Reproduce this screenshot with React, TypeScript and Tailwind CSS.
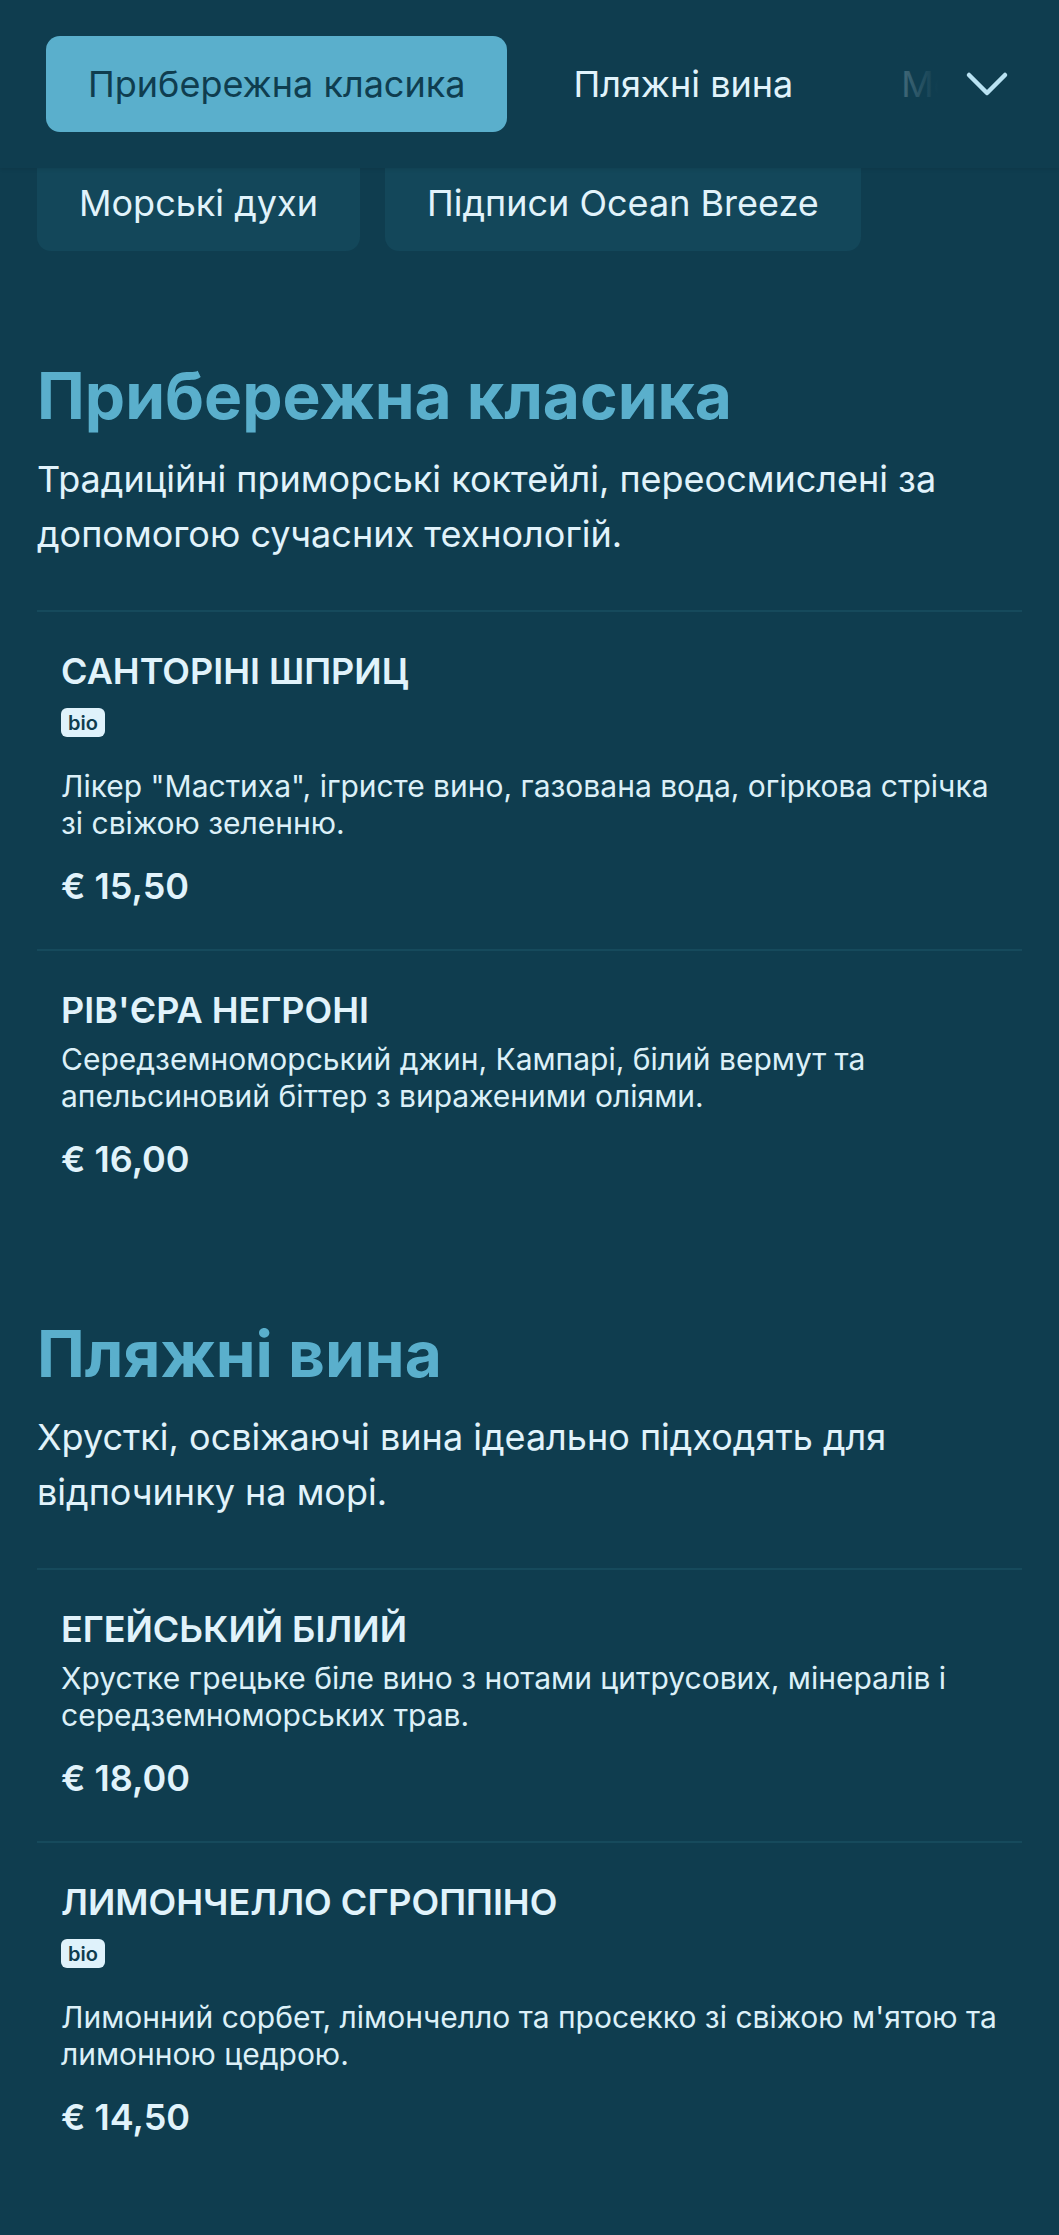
import React from 'react';

type Item = { name: string; bio?: boolean; desc: string; price: string };
type Section = { title: string; desc: string; items: Item[] };

const sections: Section[] = [
  {
    title: 'Прибережна класика',
    desc: 'Традиційні приморські коктейлі, переосмислені за допомогою сучасних технологій.',
    items: [
      {
        name: 'САНТОРІНІ ШПРИЦ',
        bio: true,
        desc: 'Лікер "Мастиха", ігристе вино, газована вода, огіркова стрічка зі свіжою зеленню.',
        price: '€ 15,50',
      },
      {
        name: "РІВ'ЄРА НЕГРОНІ",
        desc: 'Середземноморський джин, Кампарі, білий вермут та апельсиновий біттер з вираженими оліями.',
        price: '€ 16,00',
      },
    ],
  },
  {
    title: 'Пляжні вина',
    desc: 'Хрусткі, освіжаючі вина ідеально підходять для відпочинку на морі.',
    items: [
      {
        name: 'ЕГЕЙСЬКИЙ БІЛИЙ',
        desc: 'Хрустке грецьке біле вино з нотами цитрусових, мінералів і середземноморських трав.',
        price: '€ 18,00',
      },
      {
        name: 'ЛИМОНЧЕЛЛО СГРОППІНО',
        bio: true,
        desc: "Лимонний сорбет, лімончелло та просекко зі свіжою м'ятою та лимонною цедрою.",
        price: '€ 14,50',
      },
    ],
  },
];

const ChevronDown = () => (
  <svg width="44" height="27" viewBox="0 0 44 27" fill="none" stroke="currentColor" strokeWidth="4.5" strokeLinecap="round" strokeLinejoin="round">
    <polyline points="4,4 22,22 40,4" />
  </svg>
);

const MenuItem: React.FC<{ item: Item }> = ({ item }) => (
  <div className="border-t-2 border-[#164a5c] px-6 pt-[37px] pb-[41px]">
    <h3 className="text-[36px] leading-[44px] font-semibold text-[#e1f3fb]">{item.name}</h3>
    {item.bio && (
      <div className="mt-[15px] mb-[31px]">
        <span className="inline-flex h-[29px] items-center rounded-md bg-[#dff2fb] px-[7px] text-[20px] font-semibold leading-none text-[#0f3d4f]">
          bio
        </span>
      </div>
    )}
    <p className="mt-[9px] text-[30px] leading-[37px] text-[#dcf0f8]">{item.desc}</p>
    <p className="mt-[22px] text-[36px] leading-[44px] font-semibold text-[#e1f3fb]">{item.price}</p>
  </div>
);

export default function App() {
  return (
    <div className="min-h-[2235px] bg-[#0f3d4f] font-['Inter','Noto_Sans',sans-serif] text-[#e1f3fb]">
      {/* Category tabs */}
      <div className="relative z-10 flex h-[168px] items-center bg-[#0f3d4f] pl-[46px] pr-[23px] shadow-[0_1px_4px_rgba(0,0,0,0.1)]">
        <div className="relative flex flex-1 items-center gap-6 overflow-hidden">
          <button className="flex h-24 shrink-0 items-center rounded-[14px] bg-[#5aafcc] px-[42px] text-[36px] text-[#0f3d4f]">
            Прибережна класика
          </button>
          <button className="flex h-24 shrink-0 items-center rounded-[14px] px-[42px] text-[36px] text-[#e1f3fb]">
            Пляжні вина
          </button>
          <button className="flex h-24 shrink-0 items-center rounded-[14px] px-[42px] text-[36px] text-[#e1f3fb]">
            Морські духи
          </button>
          <div className="pointer-events-none absolute inset-y-0 right-0 w-[60px] bg-gradient-to-r from-[#0f3d4f]/60 to-[#0f3d4f]" />
        </div>
        <button className="flex h-24 w-[98px] shrink-0 items-center justify-center text-[#b9e2f2]">
          <ChevronDown />
        </button>
      </div>

      {/* Second row of tabs, partly under the bar */}
      <div className="h-[83px] overflow-hidden">
        <div className="-mt-[13px] flex gap-[25px] pl-[37px]">
          <div className="flex h-24 items-center rounded-[14px] bg-[#13475a] px-[42px] text-[36px] text-[#e1f3fb]">
            Морські духи
          </div>
          <div className="flex h-24 items-center rounded-[14px] bg-[#13475a] px-[42px] text-[36px] text-[#e1f3fb]">
            Підписи Ocean Breeze
          </div>
        </div>
      </div>

      <div className="flex flex-col gap-24 px-[37px] pt-[109px] pb-16">
        {sections.map(section => (
          <section key={section.title}>
            <h2 className="text-[64px] leading-[72px] font-bold text-[#5aafcc]">{section.title}</h2>
            <p className="mt-5 text-[36px] leading-[55px] text-[#e1f3fb]">{section.desc}</p>
            <div className="mt-12">
              {section.items.map(item => (
                <MenuItem key={item.name} item={item} />
              ))}
            </div>
          </section>
        ))}
      </div>
    </div>
  );
}
